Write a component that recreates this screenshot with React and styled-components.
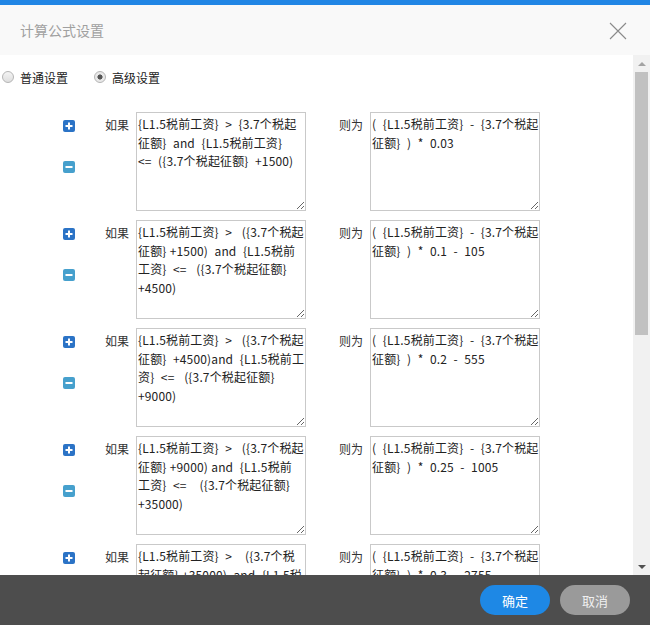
import React, { useState } from "react";
import styled, { createGlobalStyle } from "styled-components";

const GlobalStyle = createGlobalStyle`
	html, body {
		margin: 0;
		padding: 0;
		background: #fff;
	}
	body {
		font-family: "Noto Sans CJK SC", "Noto Sans", sans-serif;
	}
`;

const head = "{L1.5税前工资}";
const tax = "{3.7个税起";

const initialRows = [
	{
		id: 0,
		cond: `${head}  >  ${tax}\n征额}  and  ${head}\n<=  ({3.7个税起征额}  +1500)`,
		result: `(  ${head}  -  ${tax}\n征额}  )  *  0.03`,
	},
	{
		id: 1,
		cond: `${head}  >   (${tax}\n征额} +1500)  and  {L1.5税前\n工资}  <=   ({3.7个税起征额}\n+4500)`,
		result: `(  ${head}  -  ${tax}\n征额}  )  *  0.1  -  105`,
	},
	{
		id: 2,
		cond: `${head}  >   (${tax}\n征额}  +4500)and  {L1.5税前工\n资}  <=   ({3.7个税起征额}\n+9000)`,
		result: `(  ${head}  -  ${tax}\n征额}  )  *  0.2  -  555`,
	},
	{
		id: 3,
		cond: `${head}  >   (${tax}\n征额} +9000) and  {L1.5税前\n工资}  <=    ({3.7个税起征额}\n+35000)`,
		result: `(  ${head}  -  ${tax}\n征额}  )  *  0.25  -  1005`,
	},
	{
		id: 4,
		cond: `${head}  >    ({3.7个税\n起征额} +35000)  and  {L1.5税\n前工资}  <=   ({3.7个税起征额}\n+55000)`,
		result: `(  ${head}  -  ${tax}\n征额}  )  *  0.3  -  2755`,
	},
];

function PlusIcon() {
	return (
		<svg width="12" height="12" viewBox="0 0 12 12">
			<rect width="12" height="12" rx="2" fill="#2b73c6" />
			<rect x="2.5" y="5" width="7" height="2" fill="#fff" />
			<rect x="5" y="2.5" width="2" height="7" fill="#fff" />
		</svg>
	);
}

function MinusIcon() {
	return (
		<svg width="12" height="12" viewBox="0 0 12 12">
			<rect width="12" height="12" rx="2" fill="#46a0cd" />
			<rect x="2.5" y="5" width="7" height="2" fill="#fff" />
		</svg>
	);
}

function App() {
	const [mode, setMode] = useState("advanced");
	const [rows, setRows] = useState(initialRows);

	const handleChange = (id, key, value) => {
		setRows(rows.map((row) => (row.id === id ? { ...row, [key]: value } : row)));
	};

	return (
		<>
			<GlobalStyle />
			<Dialog>
				<Header>
					<Title>计算公式设置</Title>
					<CloseButton aria-label="close">
						<svg width="18" height="18" viewBox="0 0 18 18">
							<path d="M1 1 L17 17 M17 1 L1 17" stroke="#8a8a8a" strokeWidth="1.1" fill="none" />
						</svg>
					</CloseButton>
				</Header>

				<Body>
					<Content>
						<RadioBar>
							<RadioLabel onClick={() => setMode("normal")}>
								<Radio $checked={mode === "normal"} />
								普通设置
							</RadioLabel>
							<RadioLabel onClick={() => setMode("advanced")}>
								<Radio $checked={mode === "advanced"} />
								高级设置
							</RadioLabel>
						</RadioBar>

						<Rows>
							{rows.map((row) => (
								<Row key={row.id}>
									<IconCol>
										<IconButton>
											<PlusIcon />
										</IconButton>
										<IconButton>
											<MinusIcon />
										</IconButton>
									</IconCol>
									<FieldLabel>如果</FieldLabel>
									<Formula
										wrap="off"
										value={row.cond}
										onChange={(e) => handleChange(row.id, "cond", e.target.value)}
									/>
									<FieldLabel $gap>则为</FieldLabel>
									<Formula
										wrap="off"
										value={row.result}
										onChange={(e) => handleChange(row.id, "result", e.target.value)}
									/>
								</Row>
							))}
						</Rows>
					</Content>

					<ScrollBar>
						<ScrollArrow $up />
						<ScrollThumb />
						<ScrollSpace />
						<ScrollArrow />
					</ScrollBar>
				</Body>

				<Footer>
					<FooterButton $primary>确定</FooterButton>
					<FooterButton>取消</FooterButton>
				</Footer>
			</Dialog>
		</>
	);
}

const Dialog = styled.div`
	width: 650px;
	height: 625px;
	display: flex;
	flex-direction: column;
	border-top: 5px solid #2186e5;
	box-sizing: border-box;
	overflow: hidden;
`;

const Header = styled.div`
	height: 50px;
	flex: none;
	display: flex;
	align-items: center;
	justify-content: space-between;
	padding: 0 23px 0 20px;
	background-color: #f9f9f9;
`;

const Title = styled.div`
	color: #a0a0a0;
	font-size: 14px;
`;

const CloseButton = styled.div`
	display: flex;
	align-items: center;
	cursor: pointer;
	margin-top: 2px;
`;

const Body = styled.div`
	flex: 1;
	display: flex;
	min-height: 0;
	background-color: #fff;
`;

const Content = styled.div`
	flex: 1;
	overflow: hidden;
`;

const RadioBar = styled.div`
	display: flex;
	align-items: center;
	gap: 26px;
	height: 18px;
	margin-top: 13px;
	padding-left: 2px;
`;

const RadioLabel = styled.label`
	display: flex;
	align-items: center;
	gap: 6px;
	font-size: 12px;
	color: #222;
	cursor: pointer;
`;

const Radio = styled.span`
	width: 12px;
	height: 12px;
	box-sizing: border-box;
	border-radius: 50%;
	border: 1px solid #b5b5b5;
	background: ${(p) =>
		p.$checked
			? "radial-gradient(circle, #555 0 2.3px, #e8e8e8 2.8px)"
			: "linear-gradient(#f4f4f4, #dedede)"};
`;

const Rows = styled.div`
	display: flex;
	flex-direction: column;
	gap: 9px;
	margin-top: 26px;
	padding-left: 63px;
`;

const Row = styled.div`
	display: flex;
	align-items: flex-start;
	height: 99px;
	flex: none;
`;

const IconCol = styled.div`
	width: 42px;
	display: flex;
	flex-direction: column;
	gap: 29px;
	padding-top: 8px;
`;

const IconButton = styled.div`
	width: 12px;
	height: 12px;
	display: flex;
	cursor: pointer;
`;

const FieldLabel = styled.div`
	width: 31px;
	margin-left: ${(p) => (p.$gap ? "33px" : "0")};
	padding-top: 4px;
	font-size: 12px;
	line-height: 18px;
	color: #333;
`;

const Formula = styled.textarea`
	width: 170px;
	height: 99px;
	box-sizing: border-box;
	margin: 0;
	padding: 2px 1px;
	border: 1px solid #c9c9c9;
	font-family: "Noto Sans CJK SC", "Noto Sans", sans-serif;
	font-size: 12px;
	line-height: 18.5px;
	letter-spacing: 0.15px;
	word-spacing: 0.4px;
	color: #222;
	overflow: hidden;
	resize: both;
	outline: none;
`;

const ScrollBar = styled.div`
	width: 17px;
	flex: none;
	display: flex;
	flex-direction: column;
	background-color: #f1f1f1;
`;

const ScrollArrow = styled.div`
	height: 17px;
	flex: none;
	display: flex;
	align-items: center;
	justify-content: center;

	&::after {
		content: "";
		border-left: 4px solid transparent;
		border-right: 4px solid transparent;
		${(p) => (p.$up ? "border-bottom: 4px solid #a3a3a3;" : "border-top: 4px solid #505050;")}
	}
`;

const ScrollThumb = styled.div`
	height: 263px;
	margin: 0 2px;
	background-color: #c1c1c1;
`;

const ScrollSpace = styled.div`
	flex: 1;
`;

const Footer = styled.div`
	height: 50px;
	flex: none;
	display: flex;
	align-items: center;
	justify-content: flex-end;
	gap: 10px;
	padding-right: 20px;
	background-color: #4d4d4d;
`;

const FooterButton = styled.button`
	width: 70px;
	height: 30px;
	border: none;
	border-radius: 15px;
	font-family: "Noto Sans CJK SC", "Noto Sans", sans-serif;
	font-size: 13px;
	color: ${(p) => (p.$primary ? "#fff" : "#f0f0f0")};
	background-color: ${(p) => (p.$primary ? "#1e88e5" : "#9a9a9a")};
	cursor: pointer;
`;

export default App;
